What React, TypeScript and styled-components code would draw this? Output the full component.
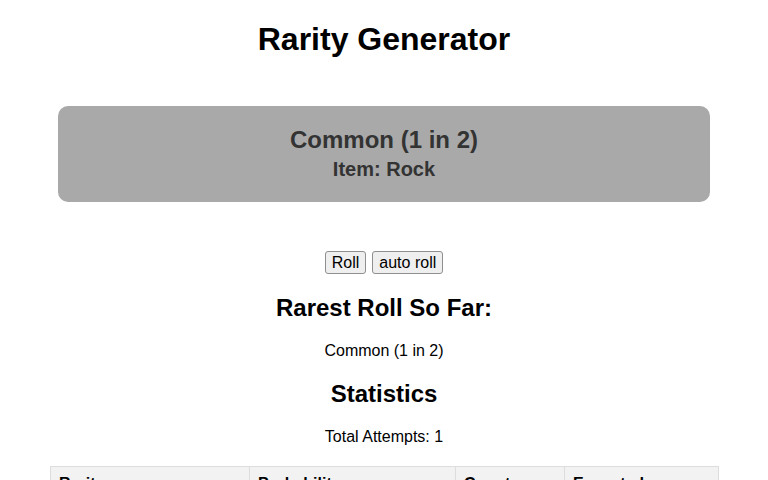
import styled, { createGlobalStyle } from "styled-components";

const GlobalStyle = createGlobalStyle`
  body {
    margin: 0;
    font-family: "Liberation Sans", Arial, sans-serif;
    text-align: center;
    color: #000;
    background: #fff;
  }
`;

const Title = styled.h1`
  font-size: 32px;
  margin: 21px 0;
`;

const ResultBox = styled.div`
  width: 85%;
  margin: 48px auto;
  padding: 20px 0 21px;
  background: #a9a9a9;
  color: #333;
  border-radius: 10px;
  box-sizing: border-box;
`;

const RarityName = styled.div`
  font-size: 24px;
  font-weight: bold;
`;

const ItemName = styled.div`
  font-size: 20px;
  font-weight: bold;
  margin-top: 4px;
`;

const Controls = styled.div`
  display: flex;
  justify-content: center;
  gap: 6px;
  padding-top: 1px;
`;

const Button = styled.button`
  font-family: "Liberation Sans", Arial, sans-serif;
  font-size: 16px;
  line-height: 18px;
  padding: 1px 6px 0;
  height: 23px;
  color: #000;
  background: #efefef;
  border: 1px solid #8f8f8f;
  border-radius: 3px;
  cursor: pointer;
`;

const Heading = styled.h2`
  font-size: 24px;
  margin: 20px 0;
`;

const Text = styled.p`
  font-size: 16px;
  margin: 16px 0;
`;

const Table = styled.table`
  width: 668px;
  margin: 20px 50px;
  border-collapse: collapse;
  table-layout: fixed;
`;

const HeadCell = styled.th<{ $w: number }>`
  width: ${(p) => p.$w}px;
  text-align: left;
  padding: 8px;
  font-size: 16px;
  background: #f2f2f2;
  border: 1px solid #ddd;
`;

const Cell = styled.td`
  text-align: left;
  padding: 8px;
  border: 1px solid #ddd;
`;

const columns = [
  { label: "Rarity", w: 182 },
  { label: "Probability", w: 189 },
  { label: "Count", w: 92 },
  { label: "Expected", w: 137 },
];

export default function App() {
  return (
    <>
      <GlobalStyle />
      <Title>Rarity Generator</Title>
      <ResultBox>
        <RarityName>Common (1 in 2)</RarityName>
        <ItemName>Item: Rock</ItemName>
      </ResultBox>
      <Controls>
        <Button>Roll</Button>
        <Button>auto roll</Button>
      </Controls>
      <Heading>Rarest Roll So Far:</Heading>
      <Text>Common (1 in 2)</Text>
      <Heading>Statistics</Heading>
      <Text>Total Attempts: 1</Text>
      <Table>
        <thead>
          <tr>
            {columns.map((c) => (
              <HeadCell key={c.label} $w={c.w}>
                {c.label}
              </HeadCell>
            ))}
          </tr>
        </thead>
        <tbody>
          <tr>
            <Cell>Common</Cell>
            <Cell>50%</Cell>
            <Cell>1</Cell>
            <Cell>2</Cell>
          </tr>
        </tbody>
      </Table>
    </>
  );
}
